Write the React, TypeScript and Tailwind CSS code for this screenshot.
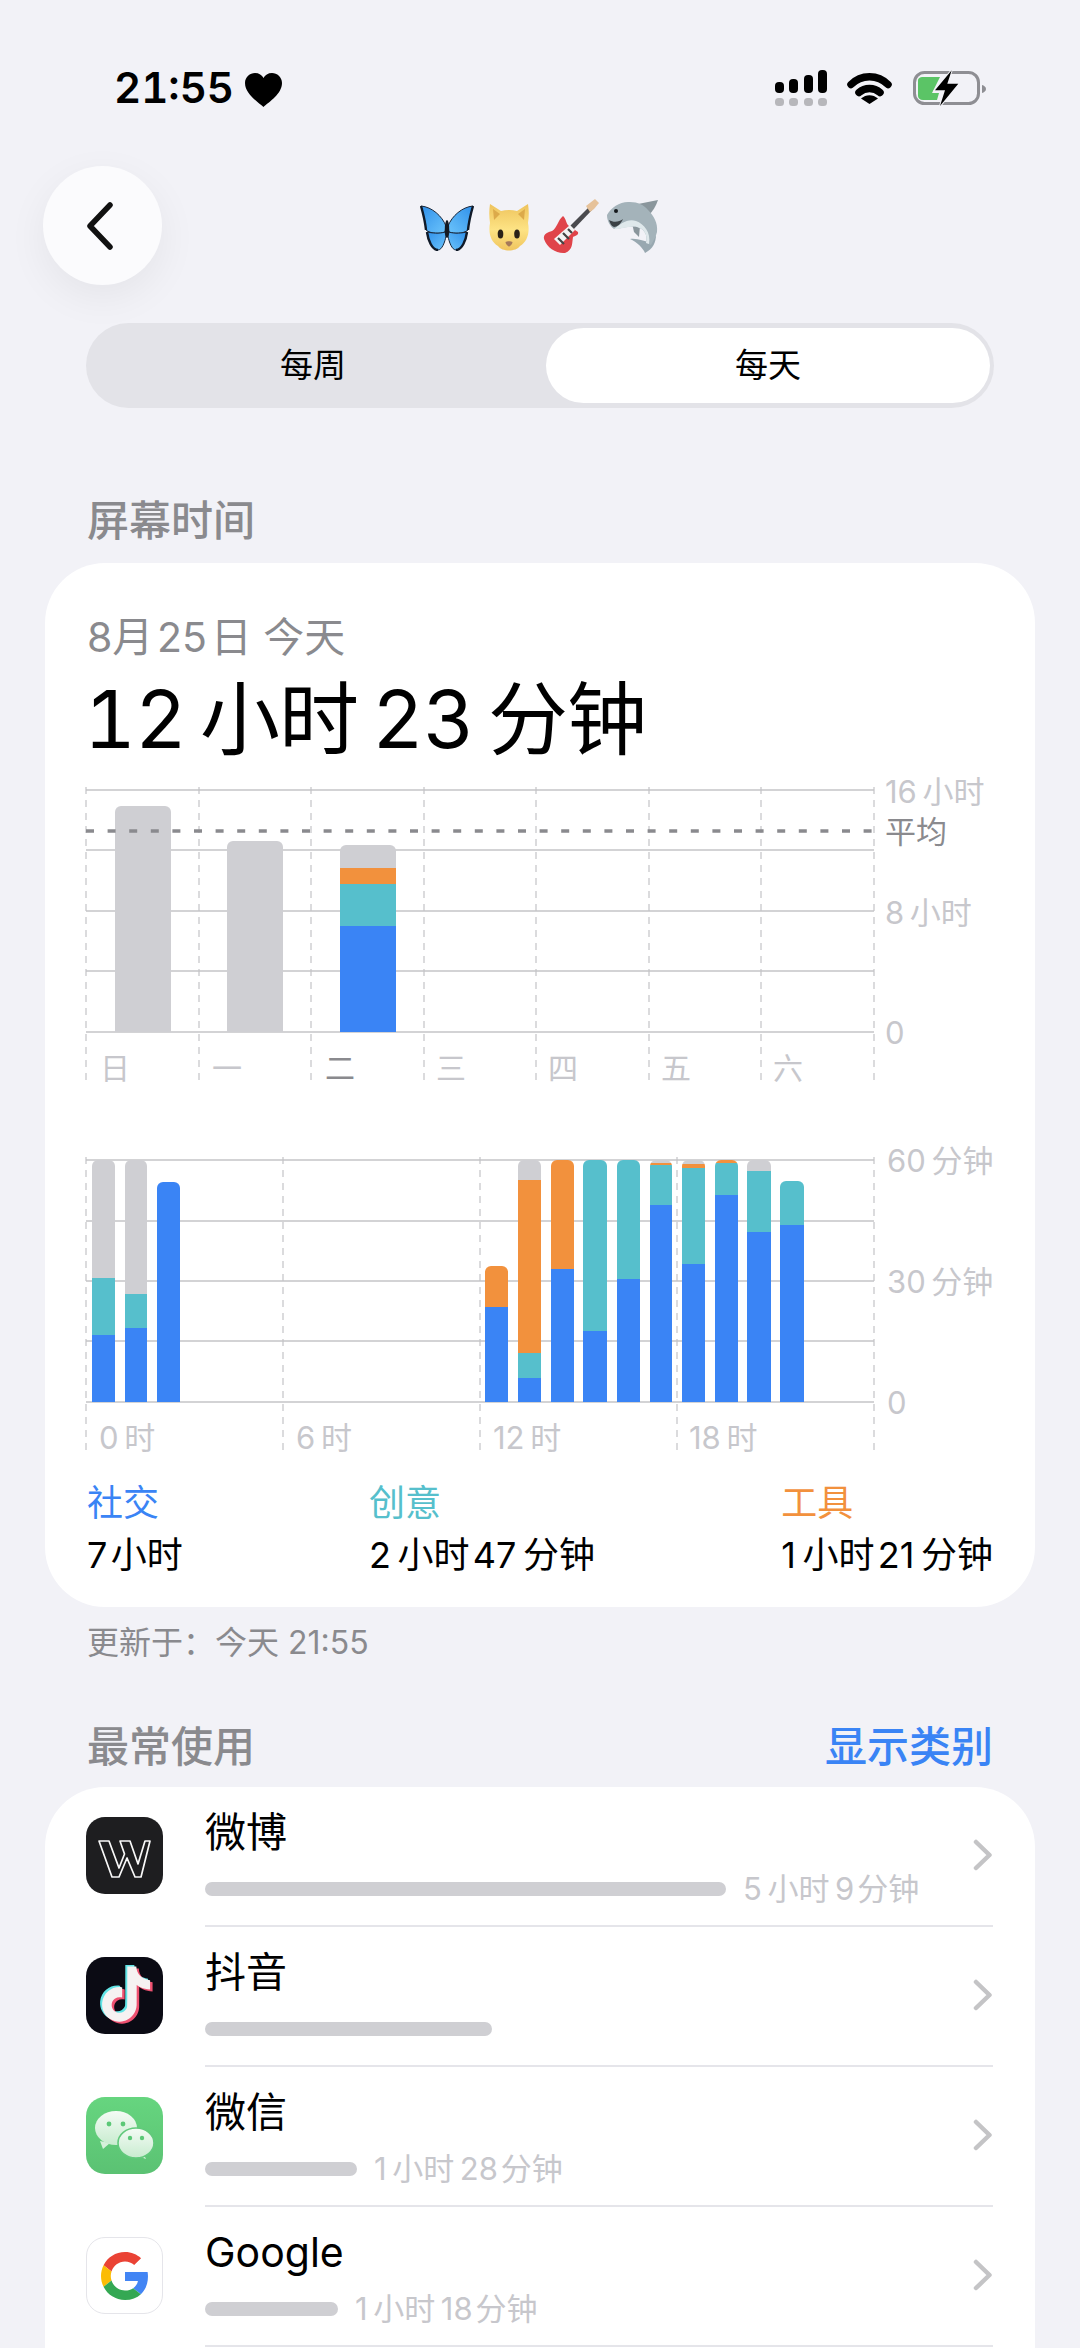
const BLUE = "#3a84f5";
const TEAL = "#56bfcc";
const ORANGE = "#f2913d";
const GREY = "#cfcfd3";

type Seg = [string, number];

// one stacked bar: segments run from the top down, each gives its colour and its lower edge
function Bar({ id, x, w, top, bottom, segs, r = 6 }: { id: string; x: number; w: number; top: number; bottom: number; segs: Seg[]; r?: number }) {
  let y = top;
  return (
    <g>
      <clipPath id={id}>
        <rect x={x} y={top} width={w} height={bottom - top + 20} rx={r} />
      </clipPath>
      <g clipPath={`url(#${id})`}>
        {segs.map(([c, end], i) => {
          const rect = <rect key={i} x={x} y={y} width={w} height={end - y} fill={c} />;
          y = end;
          return rect;
        })}
      </g>
    </g>
  );
}

function Grid({ lines, verticals, top, bottom }: { lines: number[]; verticals: number[]; top: number; bottom: number }) {
  return (
    <g>
      {lines.map((y) => (
        <line key={y} x1={86} x2={874} y1={y} y2={y} stroke="#c4c4c7" strokeWidth={1.5} />
      ))}
      {verticals.map((x) => (
        <line key={x} x1={x} x2={x} y1={top} y2={bottom} stroke="#c4c4c7" strokeWidth={1.2} strokeDasharray="7 6" />
      ))}
    </g>
  );
}

function WeekChart() {
  const days = [
    [100, "日"],
    [212, "一"],
    [325, "二"],
    [436, "三"],
    [548, "四"],
    [661, "五"],
    [773, "六"],
  ] as const;
  return (
    <svg width={992} height={325} viewBox="45 770 992 325" className="block">
      <Grid lines={[790, 850, 911, 971, 1032]} verticals={[86, 199, 311, 424, 536, 649, 761, 874]} top={787} bottom={1086} />
      <Bar id="d0" x={115} w={56} top={806} bottom={1032} segs={[[GREY, 1032]]} />
      <Bar id="d1" x={227} w={56} top={841} bottom={1032} segs={[[GREY, 1032]]} />
      <Bar id="d2" x={340} w={56} top={845} bottom={1032} segs={[[GREY, 868], [ORANGE, 884], [TEAL, 926], [BLUE, 1032]]} />
      <line x1={86} x2={874} y1={831} y2={831} stroke="#8a8a8e" strokeWidth={3.5} strokeDasharray="8 13.6" />
      {days.map(([x, t]) => (
        <text key={t} x={x} y={1068} dominantBaseline="central" className={`text-[30px] ${t === "二" ? "fill-[#8a8a8e]" : "fill-[#c7c7cc]"}`}>
          {t}
        </text>
      ))}
      <text x={885} y={791} dominantBaseline="central" className="text-[31px] fill-[#c7c7cc]">16{"\u2009"}小时</text>
      <text x={885} y={831} dominantBaseline="central" className="text-[31px] fill-[#8a8a8e]">平均</text>
      <text x={885} y={912} dominantBaseline="central" className="text-[31px] fill-[#c7c7cc]">8{"\u2009"}小时</text>
      <text x={885} y={1032} dominantBaseline="central" className="text-[31px] fill-[#c7c7cc]">0</text>
    </svg>
  );
}

const hours: { x: number; w: number; top: number; segs: Seg[] }[] = [
  { x: 92, w: 23, top: 1160, segs: [[GREY, 1278], [TEAL, 1335], [BLUE, 1402]] },
  { x: 125, w: 22, top: 1160, segs: [[GREY, 1294], [TEAL, 1328], [BLUE, 1402]] },
  { x: 157, w: 23, top: 1182, segs: [[BLUE, 1402]] },
  { x: 485, w: 23, top: 1266, segs: [[ORANGE, 1307], [BLUE, 1402]] },
  { x: 518, w: 23, top: 1160, segs: [[GREY, 1180], [ORANGE, 1353], [TEAL, 1378], [BLUE, 1402]] },
  { x: 551, w: 23, top: 1160, segs: [[ORANGE, 1269], [BLUE, 1402]] },
  { x: 583, w: 24, top: 1160, segs: [[TEAL, 1331], [BLUE, 1402]] },
  { x: 617, w: 23, top: 1160, segs: [[TEAL, 1279], [BLUE, 1402]] },
  { x: 650, w: 22, top: 1160, segs: [[GREY, 1163], [ORANGE, 1165], [TEAL, 1205], [BLUE, 1402]] },
  { x: 682, w: 23, top: 1160, segs: [[GREY, 1164], [ORANGE, 1168], [TEAL, 1264], [BLUE, 1402]] },
  { x: 715, w: 23, top: 1160, segs: [[ORANGE, 1163], [TEAL, 1195], [BLUE, 1402]] },
  { x: 747, w: 24, top: 1160, segs: [[GREY, 1171], [TEAL, 1232], [BLUE, 1402]] },
  { x: 780, w: 24, top: 1181, segs: [[TEAL, 1225], [BLUE, 1402]] },
];

function DayChart() {
  return (
    <svg width={992} height={325} viewBox="45 1140 992 325" className="block">
      <Grid lines={[1160, 1221, 1281, 1341, 1402]} verticals={[86, 283, 480, 677, 874]} top={1157} bottom={1456} />
      {hours.map((b, i) => (
        <Bar key={i} id={`h${i}`} x={b.x} w={b.w} top={b.top} bottom={1402} segs={b.segs} />
      ))}
      <g className="text-[31px] fill-[#c7c7cc]">
        <text x={99} y={1437} dominantBaseline="central">0{"\u2009"}时</text>
        <text x={296} y={1437} dominantBaseline="central">6{"\u2009"}时</text>
        <text x={493} y={1437} dominantBaseline="central">12{"\u2009"}时</text>
        <text x={689} y={1437} dominantBaseline="central">18{"\u2009"}时</text>
        <text x={887} y={1160} dominantBaseline="central">60{"\u2009"}分钟</text>
        <text x={887} y={1281} dominantBaseline="central">30{"\u2009"}分钟</text>
        <text x={887} y={1402} dominantBaseline="central">0</text>
      </g>
    </svg>
  );
}

function Butterfly() {
  const wing = (
    <g stroke="#18263a" strokeWidth={1} strokeLinejoin="round">
      <path d="M26 21C22 11 12 2 1 1C3 8 5 15 6 25C11 29 20 29 25 27Z" fill="url(#wing)" />
      <path d="M25 27C19 29 12 28 7 27C8 35 12 45 18 45C22 45 25 37 26 31Z" fill="url(#wing)" />
    </g>
  );
  return (
    <svg width={54} height={46} viewBox="0 0 54 46">
      <defs>
        <linearGradient id="wing" x1="0" y1="0" x2="1" y2="1">
          <stop offset="0" stopColor="#2f90ea" />
          <stop offset="1" stopColor="#6cc4fb" />
        </linearGradient>
      </defs>
      {wing}
      <g transform="matrix(-1 0 0 1 54 0)">{wing}</g>
      <path d="M1 1C3 8 5 15 6 25M53 1C51 8 49 15 48 25M7 27C8 35 12 45 18 45M47 27C46 35 42 45 36 45" fill="none" stroke="#101a28" strokeWidth={2.4} />
      <ellipse cx={27} cy={24} rx={2.2} ry={9} fill="#141a22" />
    </svg>
  );
}

function Cat() {
  return (
    <svg width={40} height={49} viewBox="0 0 40 49">
      <defs>
        <linearGradient id="fur" x1="0" y1="0" x2="0" y2="1">
          <stop offset="0" stopColor="#eec35c" />
          <stop offset="0.55" stopColor="#fde384" />
          <stop offset="1" stopColor="#f0c55e" />
        </linearGradient>
      </defs>
      <path d="M1 1L12 8C17 6.500 23 6.500 28 8L39 1C40 7 40 14 39 20C41 30 38 39 31 43C27 49 13 49 9 43C2 39-1 30 1 20C0 14 0 7 1 1Z" fill="url(#fur)" />
      <path d="M4 6L11 11L5 17Z" fill="#dcaa4a" />
      <path d="M36 6L29 11L35 17Z" fill="#dcaa4a" />
      <ellipse cx={11.5} cy={31} rx={2.8} ry={4.6} fill="#2a2118" />
      <ellipse cx={28} cy={31} rx={2.8} ry={4.6} fill="#2a2118" />
      <path d="M16.500 39C18 38 22 38 23.500 39C23.500 41 21 43.500 20 43.500C19 43.500 16.500 41 16.500 39Z" fill="#a5795a" />
    </svg>
  );
}

function Guitar() {
  return (
    <svg width={56} height={56} viewBox="0 0 56 56">
      <path d="M24 31L46 9L49 12L28 34Z" fill="#4a4a4e" />
      <path d="M43 8L52 1L56 5L51 11L47 14Z" fill="#e6c29a" />
      <path d="M20 18C23 20 23 26 26 28L35 34C36 37 32 38 30 39C29 45 30 52 22 55C14 56 4 50 1 41C0 36 5 34 9 33C14 30 15 22 20 18Z" fill="#e0444a" />
      <path d="M11 41L27 27L32 32L17 47Z" fill="#f4f4f4" />
      <path d="M15 40L21 46M20 35L26 41M25 31L29 35" stroke="#444" strokeWidth={2.2} />
    </svg>
  );
}

function Shark() {
  return (
    <svg width={54} height={54} viewBox="0 0 54 54">
      <path d="M32 5L52 1C50 7 47 12 43 16Z" fill="#8a969c" />
      <path d="M24 40C31 39 38 42 45 44L50 36C50 43 47 50 39 54C37 49 31 43 24 40Z" fill="#98a8b0" />
      <path d="M26 24L34 27L33 38L28 33Z" fill="#8a969c" />
      <path d="M1 16C5 8 15 2 24 3C32 3 38 6 42 11C48 17 52 24 51 33C50 38 47 42 45 46L40 44C42 35 38 30 31 28C24 26 14 30 8 30C4 27 1 22 1 16Z" fill="#a4b3ba" />
      <path d="M8 30C14 25 22 19 30 22C38 25 45 33 43 45L40 44C42 35 38 30 31 28C24 26 14 31 8 30Z" fill="#dfe8eb" />
      <path d="M3 21C8 24 13 23 17 20C15 25 11 28 8 28C5 27 4 24 3 21Z" fill="#3b4145" />
      <circle cx={10} cy={12} r={2} fill="#15191c" />
    </svg>
  );
}

function StatusIcons() {
  return (
    <div className="flex items-center">
      <svg width={52} height={37} viewBox="775 69 52 37">
        <rect x={775} y={81} width={9} height={11} rx={4} fill="#000" />
        <rect x={789} y={78} width={9} height={14} rx={4} fill="#000" />
        <rect x={804} y={74} width={9} height={18} rx={4} fill="#000" />
        <rect x={818} y={69} width={9} height={23} rx={4} fill="#000" />
        <g fill="#b7b7bb">
          <rect x={775} y={97} width={9} height={8} rx={3.5} />
          <rect x={789} y={97} width={9} height={8} rx={3.5} />
          <rect x={804} y={97} width={9} height={8} rx={3.5} />
          <rect x={818} y={97} width={9} height={8} rx={3.5} />
        </g>
      </svg>
      <svg width={45} height={32} viewBox="0 0 45 32" className="ml-[20px]">
        <path d="M4 12.500C14 2 31 2 41 12.500" fill="none" stroke="#000" strokeWidth={7.5} strokeLinecap="round" />
        <path d="M12 20.500C18 15 27 15 33 20.500" fill="none" stroke="#000" strokeWidth={7.5} strokeLinecap="round" />
        <path d="M14 26.500L22.500 32L31 26.500C26 22 19 22 14 26.500Z" fill="#000" />
      </svg>
      <svg width={73} height={37} viewBox="0 0 73 37" className="ml-[21px]">
        <rect x={1.5} y={2.5} width={64} height={31} rx={10} fill="none" stroke="#8e8e93" strokeWidth={3} />
        <path d="M69 15C71 15.5 73 17 73 19C73 21 71 22.5 69 23Z" fill="#8e8e93" />
        <path d="M5 11C5 8 7 7 10 7H27L19 23H26L24 30H10C7 30 5 28 5 26Z" fill="#5bc466" />
        <path d="M38.7.3L22 20.3H32L27 36L45.3 13.7H34.3Z" fill="#000" stroke="#f2f2f7" strokeWidth={2} paintOrder="stroke" />
      </svg>
    </div>
  );
}

function AppIcon({ name }: { name: string }) {
  if (name === "weibo") {
    return (
      <svg width={77} height={77} viewBox="0 0 77 77" className="shrink-0">
        <rect width={77} height={77} rx={19} fill="#1e1e20" />
        <path d="M13 24L23 24L33 51L38.5 37L34 24L44 24L52 47L59 24L64 24L55 60L49 60L41 41L33 60L26 60Z" fill="none" stroke="#f8f8f8" strokeWidth={1.7} strokeLinejoin="round" />
      </svg>
    );
  }
  if (name === "douyin") {
    const d = "M12.525.02c1.31-.02 2.61-.01 3.91-.02.08 1.53.63 3.09 1.75 4.17 1.12 1.11 2.7 1.62 4.24 1.79v4.03c-1.44-.05-2.89-.35-4.2-.97-.57-.26-1.1-.59-1.62-.93-.01 2.92.01 5.84-.02 8.75-.08 1.4-.54 2.79-1.35 3.94-1.31 1.92-3.58 3.17-5.91 3.21-1.43.08-2.86-.31-4.08-1.03-2.02-1.19-3.44-3.37-3.65-5.71-.02-.5-.03-1-.01-1.49.18-1.9 1.12-3.72 2.58-4.96 1.66-1.44 3.98-2.13 6.15-1.72.02 1.48-.04 2.96-.04 4.44-.99-.32-2.15-.23-3.02.37-.63.41-1.11 1.04-1.36 1.75-.21.51-.15 1.07-.14 1.61.24 1.64 1.82 3.02 3.5 2.87 1.12-.01 2.19-.66 2.77-1.61.19-.33.4-.67.41-1.06.1-1.79.06-3.57.07-5.36.01-4.03-.01-8.05.02-12.07z";
    return (
      <svg width={77} height={77} viewBox="0 0 77 77" className="shrink-0">
        <rect width={77} height={77} rx={19} fill="#0b0b14" />
        <path d={d} transform="translate(10.5 8) scale(2.3)" fill="#62e4e6" />
        <path d={d} transform="translate(15 11.500) scale(2.3)" fill="#ee5170" />
        <path d={d} transform="translate(12.500 9.500) scale(2.3)" fill="#f6f2f2" />
      </svg>
    );
  }
  if (name === "wechat") {
    return (
      <svg width={77} height={77} viewBox="0 0 77 77" className="shrink-0">
        <defs>
          <linearGradient id="wx" x1="0" y1="0" x2="0" y2="1">
            <stop offset="0" stopColor="#66d57f" />
            <stop offset="1" stopColor="#5bc273" />
          </linearGradient>
          <linearGradient id="bubble" x1="0" y1="0" x2="0" y2="1">
            <stop offset="0" stopColor="#f4fbf5" />
            <stop offset="1" stopColor="#c8eccf" />
          </linearGradient>
        </defs>
        <rect width={77} height={77} rx={19} fill="url(#wx)" />
        <path d="M14 44L17 52L24 46Z" fill="#d5f1da" />
        <ellipse cx={30} cy={31} rx={21} ry={17} fill="url(#bubble)" />
        <path d="M57 56L60 62L52 59Z" fill="#d5f1da" />
        <ellipse cx={50} cy={46} rx={18} ry={15} fill="url(#bubble)" stroke="#62c97c" strokeWidth={1.6} />
        <g fill="#5cc877">
          <circle cx={23} cy={27} r={2.4} />
          <circle cx={37} cy={27} r={2.4} />
          <circle cx={44} cy={41} r={2.2} />
          <circle cx={56} cy={41} r={2.2} />
        </g>
      </svg>
    );
  }
  return (
    <div className="shrink-0 w-[77px] h-[77px] rounded-[19px] bg-white border border-[#e5e5ea] flex items-center justify-center">
      <svg width={48} height={48} viewBox="0 0 48 48" className="blur-[0.6px]">
        <path fill="#EA4335" d="M24 9.5c3.54 0 6.71 1.22 9.21 3.6l6.85-6.85C35.9 2.38 30.47 0 24 0 14.62 0 6.51 5.38 2.56 13.22l7.98 6.19C12.43 13.72 17.74 9.5 24 9.5z" />
        <path fill="#4285F4" d="M46.98 24.55c0-1.57-.15-3.09-.38-4.55H24v9.02h12.94c-.58 2.96-2.26 5.48-4.78 7.18l7.73 6c4.51-4.18 7.09-10.36 7.09-17.65z" />
        <path fill="#FBBC05" d="M10.53 28.59c-.48-1.45-.76-2.99-.76-4.59s.27-3.14.76-4.59l-7.98-6.19C.92 16.46 0 20.12 0 24c0 3.88.92 7.54 2.56 10.78l7.97-6.19z" />
        <path fill="#34A853" d="M24 48c6.48 0 11.93-2.13 15.89-5.81l-7.73-6c-2.15 1.45-4.92 2.3-8.16 2.3-6.26 0-11.57-4.22-13.47-9.91l-7.98 6.19C6.51 42.62 14.62 48 24 48z" />
      </svg>
    </div>
  );
}

const apps = [
  { icon: "weibo", name: "微博", bar: 521, time: "5\u2009小时\u20099\u200A分钟" },
  { icon: "douyin", name: "抖音", bar: 287, time: "" },
  { icon: "wechat", name: "微信", bar: 152, time: "1\u2009小时\u200928\u200A分钟" },
  { icon: "google", name: "Google", bar: 133, time: "1\u2009小时\u200918\u200A分钟" },
];

function AppRow({ app }: { app: (typeof apps)[number] }) {
  return (
    <div className="flex pl-[41px] pr-[42px]">
      <div className="pt-[30px] mr-[42px]">
        <AppIcon name={app.icon} />
      </div>
      <div className="flex-1 h-[140px] border-b-2 border-[#e5e5ea] flex items-center">
        <div className="flex-1 self-start pt-[20px]">
          <div className="text-[41px] leading-[50px] text-black">{app.name}</div>
          <div className="mt-[12px] h-[40px] flex items-center">
            <div className="h-[14px] rounded-full bg-[#cfcfd3]" style={{ width: app.bar }} />
            {app.time && <span className="ml-[17px] text-[31px] text-[#c7c7cc] whitespace-nowrap">{app.time}</span>}
          </div>
        </div>
        <svg width={20} height={32} viewBox="0 0 20 32" className="mb-[2px]">
          <path d="M3 3L16.500 16L3 29" fill="none" stroke="#c4c4c6" strokeWidth={4.5} strokeLinecap="round" strokeLinejoin="round" />
        </svg>
      </div>
    </div>
  );
}

export default function App() {
  return (
    <div className="w-[1080px] h-[2348px] overflow-hidden bg-[#f2f2f7] font-['Inter','Noto_Sans_CJK_SC',sans-serif]">
      {/* status bar */}
      <div className="pt-[68px] h-[108px] pl-[114px] pr-[94px] flex items-center justify-between">
        <div className="flex items-center">
          <span className="text-[42px] leading-none font-semibold tabular-nums text-black">21:55</span>
          <svg width={37} height={34} viewBox="0 0 37 34" className="ml-[11px] mt-[3px]">
            <path d="M18.500 34C13 29 0 21 0 10C0 4 5 0 10 0C14 0 17 2 18.500 5C20 2 23 0 27 0C32 0 37 4 37 10C37 21 24 29 18.500 34Z" fill="#000" />
          </svg>
        </div>
        <StatusIcons />
      </div>

      {/* nav */}
      <div className="mt-[58px] pl-[43px] flex items-center">
        <div className="w-[119px] h-[119px] rounded-full bg-[#fbfbfd] shadow-[0_12px_40px_rgba(0,0,0,0.06)] flex items-center justify-center">
          <svg width={30} height={48} viewBox="0 0 30 48" className="-ml-[5px]">
            <path d="M25 3L5 24L25 45" fill="none" stroke="#111" strokeWidth={5.500} strokeLinecap="round" strokeLinejoin="round" />
          </svg>
        </div>
        <div className="ml-[258px] flex items-center">
          <div className="mt-[4px]"><Butterfly /></div>
          <div className="ml-[15px] mt-[4px]"><Cat /></div>
          <div className="ml-[14px]"><Guitar /></div>
          <div className="ml-[7px]"><Shark /></div>
        </div>
      </div>

      {/* segmented control */}
      <div className="mt-[38px] mx-[86px] h-[85px] rounded-full bg-[#e3e3e8] flex items-center pr-[4px]">
        <div className="flex-1 text-center text-[33px] text-black pr-[6px]">每周</div>
        <div className="w-[444px] h-[75px] rounded-full bg-white flex items-center justify-center text-[33px] text-black">每天</div>
      </div>

      <div className="mt-[88px] ml-[87px] text-[42px] leading-[50px] font-medium text-[#8a8a8e]">屏幕时间</div>

      {/* screen time card */}
      <div className="mt-[17px] mx-[45px] rounded-[60px] bg-white pt-[49px] pb-[29px]">
        <div className="pl-[42px] text-[41px] leading-[50px] text-[#8a8a8e]">8月{"\u200A"}25{"\u200A"}日 今天</div>
        <div className="mt-[12px] pl-[39px] text-[80px] leading-[90px] tabular-nums tracking-[-0.01em] text-black">12{"\u2009"}小时{"\u2009"}23{"\u2009"}分钟</div>
        <div className="mt-[6px]">
          <WeekChart />
        </div>
        <div className="mt-[45px]">
          <DayChart />
        </div>
        <div className="mt-[15px] px-[42px] flex justify-between">
          <div>
            <div className="text-[36px] leading-[46px] text-[#3a84f5]">社交</div>
            <div className="mt-[6px] text-[36px] leading-[46px] text-black">7{"\u200A"}小时</div>
          </div>
          <div>
            <div className="text-[36px] leading-[46px] text-[#56bfcc]">创意</div>
            <div className="mt-[6px] text-[36px] leading-[46px] text-black">2{"\u2009"}小时{"\u200A"}47{"\u2009"}分钟</div>
          </div>
          <div>
            <div className="text-[36px] leading-[46px] text-[#f2913d]">工具</div>
            <div className="mt-[6px] text-[36px] leading-[46px] text-black">1{"\u2009"}小时{"\u200A"}21{"\u2009"}分钟</div>
          </div>
        </div>
      </div>

      <div className="mt-[16px] ml-[87px] text-[32px] leading-[40px] text-[#8a8a8e]">更新于：今天 21:55</div>

      <div className="mt-[59px] mx-[87px] flex justify-between text-[42px] leading-[50px] font-medium">
        <span className="text-[#8a8a8e]">最常使用</span>
        <span className="text-[#3a84f5]">显示类别</span>
      </div>

      {/* most used */}
      <div className="mt-[15px] mx-[45px] rounded-t-[60px] bg-white pb-[40px]">
        {apps.map((a) => (
          <AppRow key={a.icon} app={a} />
        ))}
      </div>
    </div>
  );
}
